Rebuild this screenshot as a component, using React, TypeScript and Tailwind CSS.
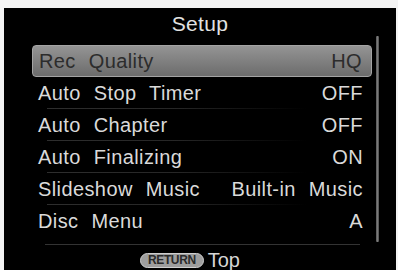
import React from 'react';

const rows = [
  { label: 'Rec Quality', value: 'HQ' },
  { label: 'Auto Stop Timer', value: 'OFF' },
  { label: 'Auto Chapter', value: 'OFF' },
  { label: 'Auto Finalizing', value: 'ON' },
  { label: 'Slideshow Music', value: 'Built-in Music' },
  { label: 'Disc Menu', value: 'A' },
];

export default function App() {
  return (
    <div
      className="w-[398px] h-[270px] bg-[#f4f4f4] pt-[8px] pl-[4px] pr-[2px] overflow-hidden"
      style={{ fontFamily: '"Liberation Sans", Arial, sans-serif' }}
    >
      <div className="h-[262px] bg-black flex flex-col">
        {/* Title */}
        <div className="h-[28px] flex items-center justify-center pt-[2px] text-[21px] text-[#e2e2e2] leading-none tracking-[0.3px]">
          Setup
        </div>

        {/* List + scrollbar */}
        <div className="flex h-[207px]">
          <div className="w-[340px] ml-[28px] pt-[9px] flex flex-col">
            {rows.map((row, i) =>
              i === 0 ? (
                <div
                  key={row.label}
                  className="h-[32px] flex items-center justify-between pl-[6px] pr-[9px] rounded-[4px] border border-[#a4a4a4] bg-gradient-to-b from-[#949494] via-[#808080] to-[#6c6c6c] text-[20px] text-[#2c2c2c] tracking-[0.4px] [word-spacing:7px]"
                >
                  <span>{row.label}</span>
                  <span>{row.value}</span>
                </div>
              ) : (
                <div key={row.label} className="h-[32px] flex flex-col">
                  <div className="flex-1 flex items-center justify-between pl-[6px] pr-[9px] text-[20px] text-[#dadada] tracking-[0.4px] [word-spacing:7px]">
                    <span>{row.label}</span>
                    <span>{row.value}</span>
                  </div>
                  {i < rows.length - 1 && (
                    <div className="h-px ml-[15px] w-[260px] bg-gradient-to-r from-[#2e2e2e] via-[#262626] to-transparent" />
                  )}
                </div>
              )
            )}
          </div>
          <div className="ml-[4px] w-[3px] mb-[1px] bg-gradient-to-r from-[#555] via-[#7a7a7a] to-[#4a4a4a] rounded-[1px]" />
        </div>

        {/* Bottom line */}
        <div className="h-px ml-[41px] w-[315px] bg-[#333] mt-[1px]" />

        {/* Footer */}
        <div className="flex items-center justify-center gap-[4px] mt-[5px] pr-[20px]">
          <span className="h-[15px] px-[7px] rounded-full bg-[#9e9e9e] border border-[#cfcfcf] flex items-center text-[12px] font-bold text-[#2a2a2a] leading-none tracking-[-0.4px]">
            RETURN
          </span>
          <span className="text-[20px] text-[#d6d6d6] leading-none">Top</span>
        </div>
      </div>
    </div>
  );
}
